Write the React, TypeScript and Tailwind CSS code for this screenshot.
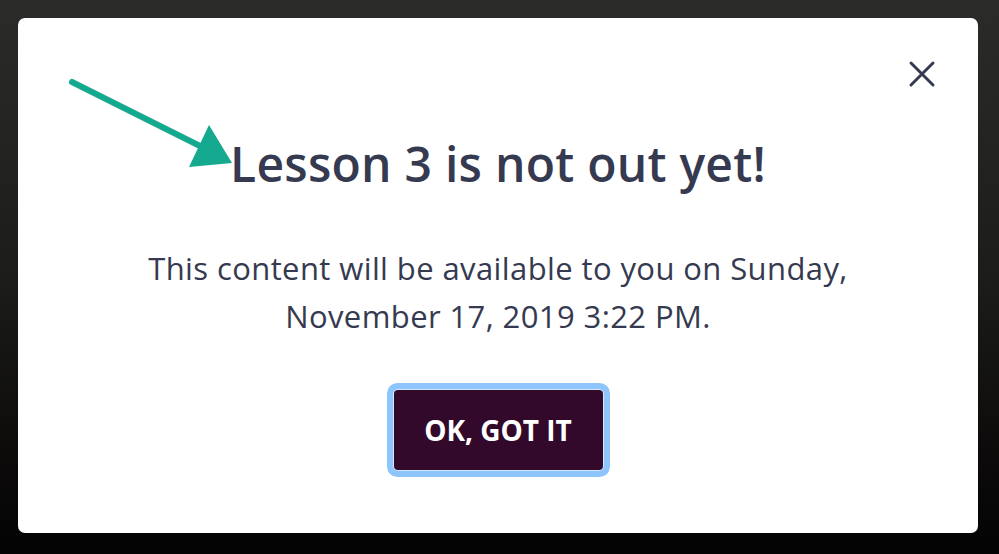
function Arrow() {
  return (
    <svg
      className="absolute left-0 top-0 pointer-events-none"
      width="240"
      height="180"
      viewBox="0 0 240 180"
    >
      <line x1="54" y1="64" x2="186" y2="130" stroke="#15a98f" strokeWidth="6" strokeLinecap="round" />
      <polygon points="191,107 214,145 171,149" fill="#15a98f" />
    </svg>
  )
}

function CloseIcon() {
  return (
    <svg width="28" height="28" viewBox="0 0 28 28" fill="none">
      <path d="M3 3 L25 25 M25 3 L3 25" stroke="#353a50" strokeWidth="3" strokeLinecap="round" />
    </svg>
  )
}

export default function App() {
  return (
    <div
      className="w-[999px] h-[554px] overflow-hidden bg-gradient-to-b from-[#2b2b29] via-[#1c1c1a] to-[#050404] p-[18px] pb-[21px]"
      style={{ fontFamily: '"Open Sans", "Noto Sans", sans-serif' }}
    >
      <div className="relative h-[515px] w-[960px] rounded-[7px] bg-white flex flex-col items-center pt-[118px]">
        <Arrow />

        <button className="absolute right-[42px] top-[42px]" aria-label="Close">
          <CloseIcon />
        </button>

        <h1 className="text-[48px] leading-[56px] font-semibold text-[#353a50] tracking-[0.25px]">
          Lesson 3 is not out yet!
        </h1>

        <p className="mt-[52px] text-[31px] leading-[48px] text-[#353a50] text-center tracking-[0.4px]">
          This content will be available to you on Sunday,
          <br />
          November 17, 2019 3:22 PM.
        </p>

        <button className="mt-[50px] w-[209px] h-[80px] rounded-[4px] bg-[#33092b] text-white text-[28px] font-bold shadow-[0_0_0_1px_#d2e8ff,0_0_0_7px_#8ec5fd]">
          OK, GOT IT
        </button>
      </div>
    </div>
  )
}
